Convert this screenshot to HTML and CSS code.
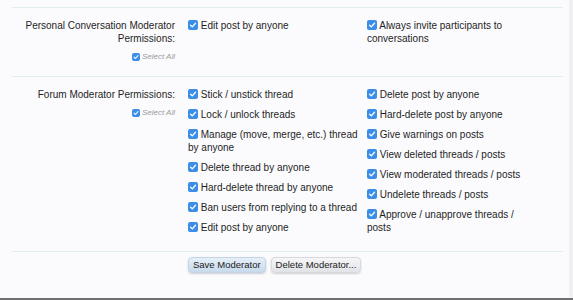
FILE: index.html
```html
<!DOCTYPE html>
<html>
<head>
<meta charset="utf-8">
<link rel="stylesheet" href="styles.css">
</head>
<body>
<div class="frame">
  <div class="page">
    <div class="section">
      <div class="label">
        <div class="label-text">Personal Conversation Moderator Permissions:</div>
        <div class="select-all"><span class="cb cb-sm"><svg viewBox="0 0 10 10"><path d="M2.6 5.2 L4.3 6.9 L7.5 3.3" /></svg></span><span>Select All</span></div>
      </div>
      <div class="cols">
        <ul class="col">
          <li><span class="cb"><svg viewBox="0 0 10 10"><path d="M2.6 5.2 L4.3 6.9 L7.5 3.3" /></svg></span> Edit post by anyone</li>
        </ul>
        <ul class="col">
          <li><span class="cb"><svg viewBox="0 0 10 10"><path d="M2.6 5.2 L4.3 6.9 L7.5 3.3" /></svg></span> Always invite participants to conversations</li>
        </ul>
      </div>
    </div>
    <div class="section">
      <div class="label">
        <div class="label-text">Forum Moderator Permissions:</div>
        <div class="select-all"><span class="cb cb-sm"><svg viewBox="0 0 10 10"><path d="M2.6 5.2 L4.3 6.9 L7.5 3.3" /></svg></span><span>Select All</span></div>
      </div>
      <div class="cols">
        <ul class="col">
          <li><span class="cb"><svg viewBox="0 0 10 10"><path d="M2.6 5.2 L4.3 6.9 L7.5 3.3" /></svg></span> Stick / unstick thread</li>
          <li><span class="cb"><svg viewBox="0 0 10 10"><path d="M2.6 5.2 L4.3 6.9 L7.5 3.3" /></svg></span> Lock / unlock threads</li>
          <li><span class="cb"><svg viewBox="0 0 10 10"><path d="M2.6 5.2 L4.3 6.9 L7.5 3.3" /></svg></span> Manage (move, merge, etc.) thread by anyone</li>
          <li><span class="cb"><svg viewBox="0 0 10 10"><path d="M2.6 5.2 L4.3 6.9 L7.5 3.3" /></svg></span> Delete thread by anyone</li>
          <li><span class="cb"><svg viewBox="0 0 10 10"><path d="M2.6 5.2 L4.3 6.9 L7.5 3.3" /></svg></span> Hard-delete thread by anyone</li>
          <li><span class="cb"><svg viewBox="0 0 10 10"><path d="M2.6 5.2 L4.3 6.9 L7.5 3.3" /></svg></span> Ban users from replying to a thread</li>
          <li><span class="cb"><svg viewBox="0 0 10 10"><path d="M2.6 5.2 L4.3 6.9 L7.5 3.3" /></svg></span> Edit post by anyone</li>
        </ul>
        <ul class="col">
          <li><span class="cb"><svg viewBox="0 0 10 10"><path d="M2.6 5.2 L4.3 6.9 L7.5 3.3" /></svg></span> Delete post by anyone</li>
          <li><span class="cb"><svg viewBox="0 0 10 10"><path d="M2.6 5.2 L4.3 6.9 L7.5 3.3" /></svg></span> Hard-delete post by anyone</li>
          <li><span class="cb"><svg viewBox="0 0 10 10"><path d="M2.6 5.2 L4.3 6.9 L7.5 3.3" /></svg></span> Give warnings on posts</li>
          <li><span class="cb"><svg viewBox="0 0 10 10"><path d="M2.6 5.2 L4.3 6.9 L7.5 3.3" /></svg></span> View deleted threads / posts</li>
          <li><span class="cb"><svg viewBox="0 0 10 10"><path d="M2.6 5.2 L4.3 6.9 L7.5 3.3" /></svg></span> View moderated threads / posts</li>
          <li><span class="cb"><svg viewBox="0 0 10 10"><path d="M2.6 5.2 L4.3 6.9 L7.5 3.3" /></svg></span> Undelete threads / posts</li>
          <li><span class="cb"><svg viewBox="0 0 10 10"><path d="M2.6 5.2 L4.3 6.9 L7.5 3.3" /></svg></span> Approve / unapprove threads / posts</li>
        </ul>
      </div>
    </div>
    <div class="buttons">
      <button class="btn btn-primary">Save Moderator</button>
      <button class="btn">Delete Moderator...</button>
    </div>
  </div>
</div>
</body>
</html>
```

FILE: styles.css
```css
html, body {
  margin: 0;
  padding: 0;
}
body {
  width: 573px;
  height: 300px;
  overflow: hidden;
  background: #fbfbfd;
  font-family: "Liberation Sans", Arial, sans-serif;
  font-size: 10px;
  color: #1e1e1e;
}
.frame {
  height: 298px;
  border-bottom: 2px solid #6f6f72;
  display: flex;
}
.page {
  width: 551px;
  padding: 7px 6px 0 12px;
  border-right: 4px solid #f0f0f3;
}
.section {
  border-top: 1px solid #e3edf1;
  display: grid;
  grid-template-columns: 163px 1fr;
  column-gap: 13px;
  padding: 11px 0 10px;
}
.label {
  text-align: right;
}
.label-text {
  line-height: 13px;
}
.select-all {
  margin-top: 7px;
  margin-bottom: 4px;
  font-size: 8px;
  line-height: 10px;
  font-style: italic;
  color: #9a9a9a;
  display: flex;
  justify-content: flex-end;
  align-items: center;
  gap: 2px;
}
.cols {
  display: grid;
  grid-template-columns: 174px 172px;
  column-gap: 5px;
}
.col {
  list-style: none;
  margin: 0;
  padding: 0;
}
.col li {
  line-height: 13px;
  margin-bottom: 7px;
}
.cb {
  display: inline-block;
  width: 10px;
  height: 10px;
  border-radius: 2px;
  background: #3b8ee8;
  vertical-align: -1px;
}
.cb svg {
  display: block;
  width: 10px;
  height: 10px;
}
.cb path {
  fill: none;
  stroke: #fff;
  stroke-width: 1.3;
  stroke-linecap: round;
  stroke-linejoin: round;
}
.cb-sm {
  width: 8px;
  height: 8px;
}
.cb-sm svg {
  width: 8px;
  height: 8px;
}
.buttons {
  border-top: 1px solid #e3edf1;
  padding: 5px 0 0 176px;
  display: flex;
  gap: 5px;
}
.btn {
  font-family: "Liberation Sans", Arial, sans-serif;
  font-size: 9.5px;
  color: #222;
  height: 16px;
  line-height: 14px;
  padding: 0 4px;
  border: 1px solid #d6d9de;
  border-radius: 4px;
  background: linear-gradient(#f6f6f8, #e2e3e7);
  box-shadow: 0 1px 2px rgba(0,0,0,0.18);
}
.btn-primary {
  background: linear-gradient(#e6eff8, #c7daec);
  border-color: #c4d4e4;
}
```
